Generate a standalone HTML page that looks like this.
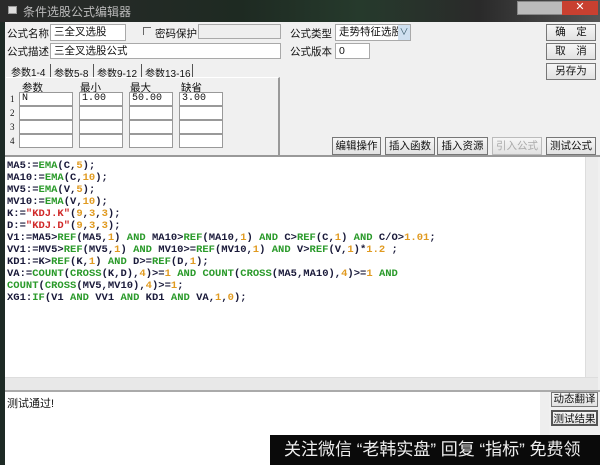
<!DOCTYPE html>
<html><head><meta charset="utf-8"><style>
*{margin:0;padding:0;box-sizing:border-box}
body{width:600px;height:465px;overflow:hidden;position:relative;background:#f0f0f0;font-family:"Liberation Sans","Noto Sans CJK SC",sans-serif;font-size:10.5px;color:#111}
.a{position:absolute}
.in{position:absolute;background:#fff;border:1px solid #a9a9a9;font-size:10.5px;padding:1px 3px;line-height:13px}
.btn{position:absolute;background:linear-gradient(#f6f6f6,#e2e2e2);border:1px solid #777;text-align:center;font-size:10.5px;line-height:15px}
.cell{position:absolute;background:#fff;border:1px solid #999;height:14px;font-family:"Liberation Mono",monospace;font-size:10px;padding-left:2px;line-height:12px}
#code{position:absolute;left:5px;top:157px;width:580px;height:220px;background:#fff;font-family:"Liberation Mono",monospace;font-weight:bold;font-size:10.5px;line-height:12px;padding:3px 0 0 2px;color:#1a1a3a;white-space:pre}
.g{color:#2a9a2a}.o{color:#e09a20}.r{color:#d02828}
</style></head><body>
<div class="a" style="left:0;top:0;width:600px;height:22px;background:linear-gradient(90deg,#2a2a2a,#1e2a22 40%,#263a2c 60%,#2a2a2a 80%,#555)"></div>
<div class="a" style="left:8px;top:6px;width:9px;height:8px;background:#ddd;border:1px solid #999"></div>
<div class="a" style="left:23px;top:3px;color:#bbb;font-size:12px">条件选股公式编辑器</div>
<div class="a" style="left:517px;top:1px;width:81px;height:14px;background:#bbb;border:1px solid #888"></div>
<div class="a" style="left:562px;top:1px;width:36px;height:14px;background:#c84030;color:#fff;text-align:center;font-size:11px;line-height:13px">✕</div>
<div class="a" style="left:0;top:22px;width:5px;height:443px;background:#1d2a25"></div>

<div class="a" style="left:7px;top:26px">公式名称</div>
<div class="in" style="left:50px;top:24px;width:76px;height:17px">三全叉选股</div>
<div class="a" style="left:143px;top:27px;width:8px;height:8px;border-left:1px solid #666;border-top:1px solid #666"></div>
<div class="a" style="left:155px;top:26px">密码保护</div>
<div class="in" style="left:198px;top:24px;width:83px;height:15px;background:#eee"></div>
<div class="a" style="left:7px;top:44px">公式描述</div>
<div class="in" style="left:50px;top:43px;width:231px;height:16px">三全叉选股公式</div>

<div class="a" style="left:290px;top:26px">公式类型</div>
<div class="in" style="left:335px;top:24px;width:76px;height:17px">走势特征选股</div>
<div class="a" style="left:398px;top:25px;width:12px;height:15px;background:#cfe0f0;color:#356;font-size:9px;text-align:center;line-height:15px">∨</div>
<div class="a" style="left:290px;top:44px">公式版本</div>
<div class="in" style="left:335px;top:43px;width:35px;height:16px">0</div>

<div class="btn" style="left:546px;top:24px;width:50px;height:17px">确　定</div>
<div class="btn" style="left:546px;top:43px;width:50px;height:17px">取　消</div>
<div class="btn" style="left:546px;top:63px;width:50px;height:17px">另存为</div>

<div class="a" style="left:11px;top:64px;font-size:10px">参数1-4</div>
<div class="a" style="left:50px;top:64px;width:1px;height:13px;background:#555"></div>
<div class="a" style="left:54px;top:65px;font-size:10px">参数5-8</div>
<div class="a" style="left:93px;top:64px;width:1px;height:13px;background:#555"></div>
<div class="a" style="left:97px;top:65px;font-size:10px">参数9-12</div>
<div class="a" style="left:141px;top:64px;width:1px;height:13px;background:#555"></div>
<div class="a" style="left:145px;top:65px;font-size:10px">参数13-16</div>
<div class="a" style="left:192px;top:64px;width:1px;height:13px;background:#555"></div>
<div class="a" style="left:6px;top:77px;width:274px;height:78px;border-right:2px solid #999;border-top:1px solid #fff"></div>
<div class="a" style="left:22px;top:80px">参数</div>
<div class="a" style="left:80px;top:80px">最小</div>
<div class="a" style="left:130px;top:80px">最大</div>
<div class="a" style="left:181px;top:80px">缺省</div>
<div class="a" style="left:10px;top:94px;font-size:9px;font-family:'Liberation Serif',serif">1</div>
<div class="a" style="left:10px;top:108px;font-size:9px;font-family:'Liberation Serif',serif">2</div>
<div class="a" style="left:10px;top:122px;font-size:9px;font-family:'Liberation Serif',serif">3</div>
<div class="a" style="left:10px;top:136px;font-size:9px;font-family:'Liberation Serif',serif">4</div>
<div class="cell" style="left:19px;top:92px;width:54px">N</div><div class="cell" style="left:79px;top:92px;width:44px">1.00</div><div class="cell" style="left:129px;top:92px;width:44px">50.00</div><div class="cell" style="left:179px;top:92px;width:44px">3.00</div>
<div class="cell" style="left:19px;top:106px;width:54px"></div><div class="cell" style="left:79px;top:106px;width:44px"></div><div class="cell" style="left:129px;top:106px;width:44px"></div><div class="cell" style="left:179px;top:106px;width:44px"></div>
<div class="cell" style="left:19px;top:120px;width:54px"></div><div class="cell" style="left:79px;top:120px;width:44px"></div><div class="cell" style="left:129px;top:120px;width:44px"></div><div class="cell" style="left:179px;top:120px;width:44px"></div>
<div class="cell" style="left:19px;top:134px;width:54px"></div><div class="cell" style="left:79px;top:134px;width:44px"></div><div class="cell" style="left:129px;top:134px;width:44px"></div><div class="cell" style="left:179px;top:134px;width:44px"></div>

<div class="btn" style="left:332px;top:137px;width:49px;height:18px;line-height:16px">编辑操作</div>
<div class="btn" style="left:385px;top:137px;width:50px;height:18px;line-height:16px">插入函数</div>
<div class="btn" style="left:437px;top:137px;width:51px;height:18px;line-height:16px">插入资源</div>
<div class="btn" style="left:492px;top:137px;width:50px;height:18px;line-height:16px;color:#aaa;border-color:#bbb">引入公式</div>
<div class="btn" style="left:546px;top:137px;width:50px;height:18px;line-height:16px">测试公式</div>

<div class="a" style="left:5px;top:155px;width:595px;height:2px;background:#999"></div>
<div id="code">MA5:=<span class="g">EMA</span>(C,<span class="o">5</span>);
MA10:=<span class="g">EMA</span>(C,<span class="o">10</span>);
MV5:=<span class="g">EMA</span>(V,<span class="o">5</span>);
MV10:=<span class="g">EMA</span>(V,<span class="o">10</span>);
K:=<span class="r">"KDJ.K"</span>(<span class="o">9</span>,<span class="o">3</span>,<span class="o">3</span>);
D:=<span class="r">"KDJ.D"</span>(<span class="o">9</span>,<span class="o">3</span>,<span class="o">3</span>);
V1:=MA5&gt;<span class="g">REF</span>(MA5,<span class="o">1</span>) <span class="g">AND</span> MA10&gt;<span class="g">REF</span>(MA10,<span class="o">1</span>) <span class="g">AND</span> C&gt;<span class="g">REF</span>(C,<span class="o">1</span>) <span class="g">AND</span> C/O&gt;<span class="o">1.01</span>;
VV1:=MV5&gt;<span class="g">REF</span>(MV5,<span class="o">1</span>) <span class="g">AND</span> MV10&gt;=<span class="g">REF</span>(MV10,<span class="o">1</span>) <span class="g">AND</span> V&gt;<span class="g">REF</span>(V,<span class="o">1</span>)*<span class="o">1.2</span> ;
KD1:=K&gt;<span class="g">REF</span>(K,<span class="o">1</span>) <span class="g">AND</span> D&gt;=<span class="g">REF</span>(D,<span class="o">1</span>);
VA:=<span class="g">COUNT</span>(<span class="g">CROSS</span>(K,D),<span class="o">4</span>)&gt;=<span class="o">1</span> <span class="g">AND</span> <span class="g">COUNT</span>(<span class="g">CROSS</span>(MA5,MA10),<span class="o">4</span>)&gt;=<span class="o">1</span> <span class="g">AND</span>
<span class="g">COUNT</span>(<span class="g">CROSS</span>(MV5,MV10),<span class="o">4</span>)&gt;=<span class="o">1</span>;
XG1:<span class="g">IF</span>(V1 <span class="g">AND</span> VV1 <span class="g">AND</span> KD1 <span class="g">AND</span> VA,<span class="o">1</span>,<span class="o">0</span>);</div>
<div class="a" style="left:585px;top:157px;width:13px;height:220px;background:#ececec;border-left:1px solid #ddd"></div>
<div class="a" style="left:5px;top:377px;width:593px;height:13px;background:#e8e8e8;border-top:1px solid #ddd"></div>
<div class="a" style="left:5px;top:390px;width:595px;height:2px;background:#aaa"></div>
<div class="a" style="left:5px;top:392px;width:544px;height:73px;background:#fff"></div>
<div class="a" style="left:7px;top:395px;font-size:11px">测试通过!</div>
<div class="a" style="left:540px;top:392px;width:9px;height:73px;background:#eee"></div>
<div class="btn" style="left:551px;top:392px;width:47px;height:15px;line-height:13px;font-size:10.5px">动态翻译</div>
<div class="btn" style="left:551px;top:410px;width:47px;height:16px;line-height:14px;font-size:10.5px;border:2px solid #555">测试结果</div>
<div class="a" style="left:270px;top:435px;width:330px;height:30px;background:#0a0a0a;color:#eee;font-size:17px;line-height:30px;padding-left:14px;white-space:nowrap;overflow:hidden">关注微信 “老韩实盘” 回复 “指标” 免费领</div>
</body></html>
